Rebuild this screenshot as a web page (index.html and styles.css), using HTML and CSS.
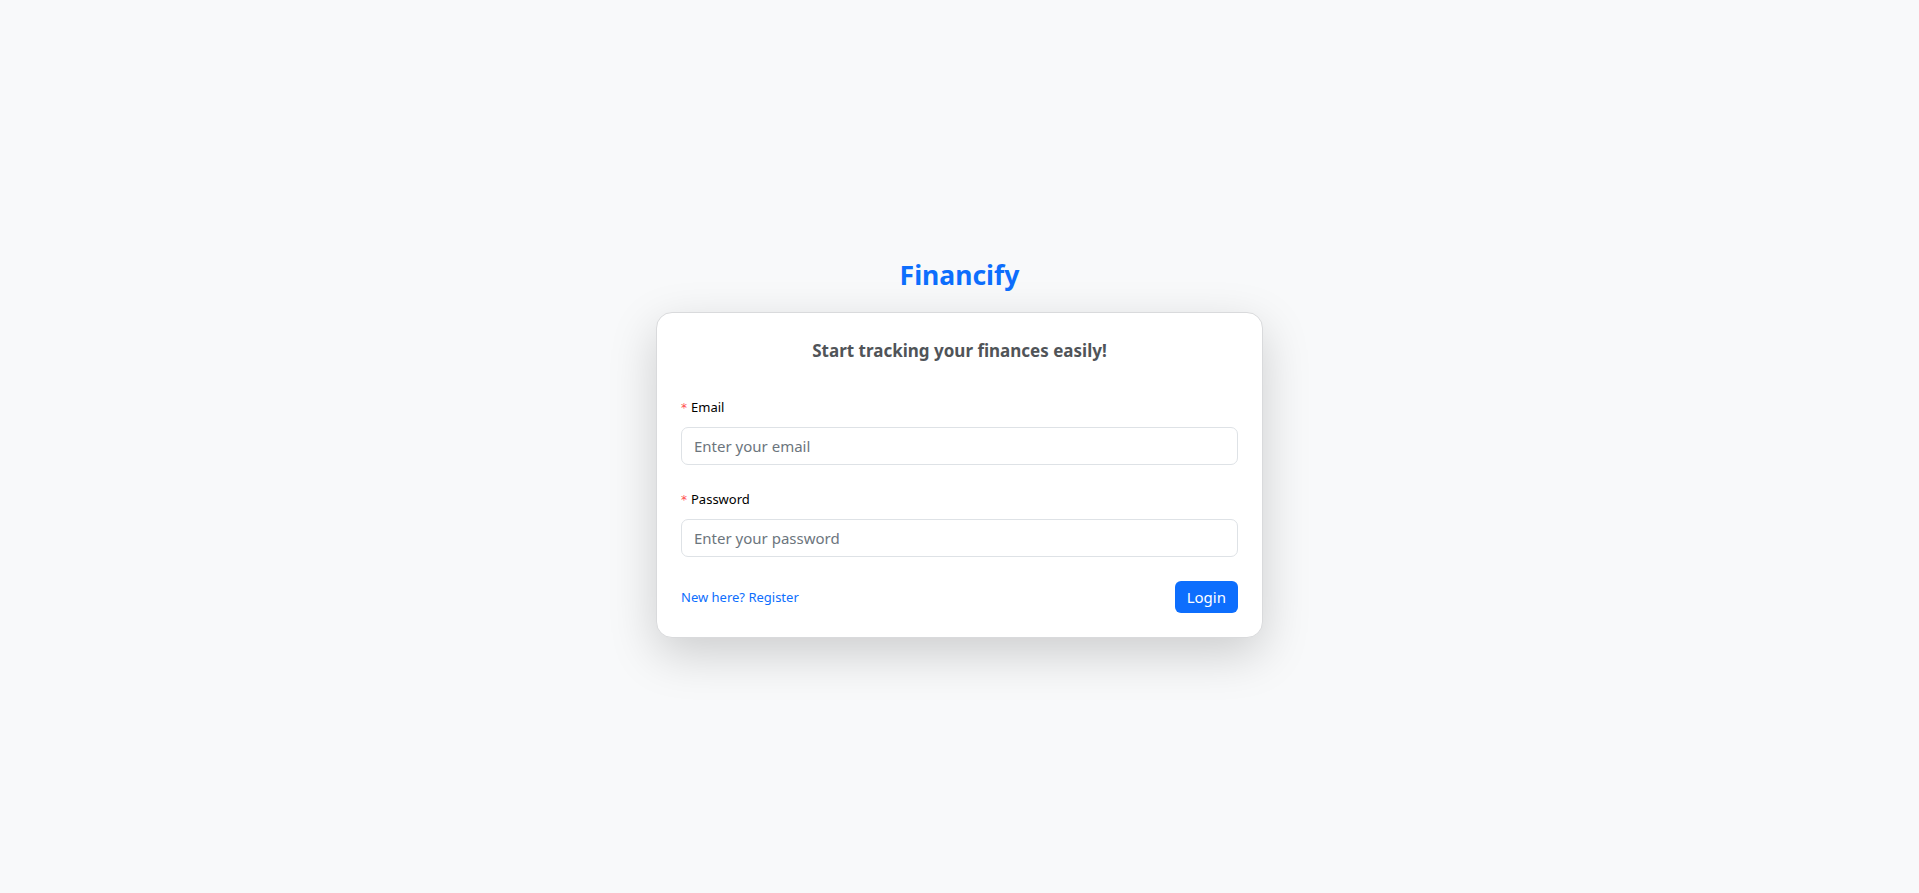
FILE: index.html
```html
<!DOCTYPE html>
<html lang="en">
<head>
<meta charset="utf-8">
<title>Financify - Login</title>
<link rel="stylesheet" href="styles.css">
</head>
<body>
<main class="page">
  <h1 class="brand">Financify</h1>
  <section class="card">
    <h2 class="card-title">Start tracking your finances easily!</h2>
    <form class="form">
      <div class="form-item">
        <label class="form-label" for="email"><span class="req">*</span>Email</label>
        <input class="form-input" id="email" type="email" placeholder="Enter your email">
      </div>
      <div class="form-item">
        <label class="form-label" for="password"><span class="req">*</span>Password</label>
        <input class="form-input" id="password" type="password" placeholder="Enter your password">
      </div>
      <div class="form-footer">
        <a class="link" href="#">New here? Register</a>
        <button class="btn" type="button">Login</button>
      </div>
    </form>
  </section>
</main>
</body>
</html>
```

FILE: styles.css
```css
* { box-sizing: border-box; }
html, body { margin: 0; padding: 0; }
body {
  background: #f8f9fa;
  font-family: "Noto Sans", "Open Sans", sans-serif;
  color: #212529;
}
.page {
  min-height: 893px;
  padding-top: 3px;
  display: flex;
  flex-direction: column;
  align-items: center;
  justify-content: center;
}
.brand {
  margin: 0 0 20px;
  font-size: 26.5px;
  line-height: 34px;
  font-weight: 700;
  color: #0d6efd;
}
.card {
  width: 607px;
  background: #fff;
  border: 1px solid #d9dadc;
  border-radius: 16px;
  padding: 24px;
  box-shadow: 0 16px 48px rgba(0, 0, 0, 0.175);
}
.card-title {
  margin: 0 0 32px;
  text-align: center;
  font-size: 17px;
  line-height: 27px;
  font-weight: 700;
  color: #505458;
}
.form { display: flex; flex-direction: column; }
.form-item {
  display: flex;
  flex-direction: column;
  margin-bottom: 24px;
}
.form-item + .form-item { margin-top: -1px; }
.form-label {
  font-size: 13px;
  line-height: 22px;
  padding-bottom: 8px;
  color: #000;
}
.req {
  color: #ff4d4f;
  font-family: "DejaVu Sans", sans-serif;
  font-size: 12px;
  margin-right: 4px;
}
.form-input {
  height: 38px;
  width: 100%;
  border: 1px solid #dee2e6;
  border-radius: 7px;
  padding: 0 12px;
  font-family: inherit;
  font-size: 15px;
  color: #212529;
  background: #fff;
  outline: none;
}
.form-input::placeholder { color: #6c757d; }
.form-footer {
  display: flex;
  justify-content: space-between;
  align-items: center;
}
.link {
  font-size: 13px;
  color: #0d6efd;
  text-decoration: none;
}
.btn {
  height: 32px;
  padding: 0 12px;
  border: none;
  border-radius: 6px;
  background: #0d6efd;
  color: #fff;
  font-family: inherit;
  font-size: 15px;
  cursor: pointer;
}
```
